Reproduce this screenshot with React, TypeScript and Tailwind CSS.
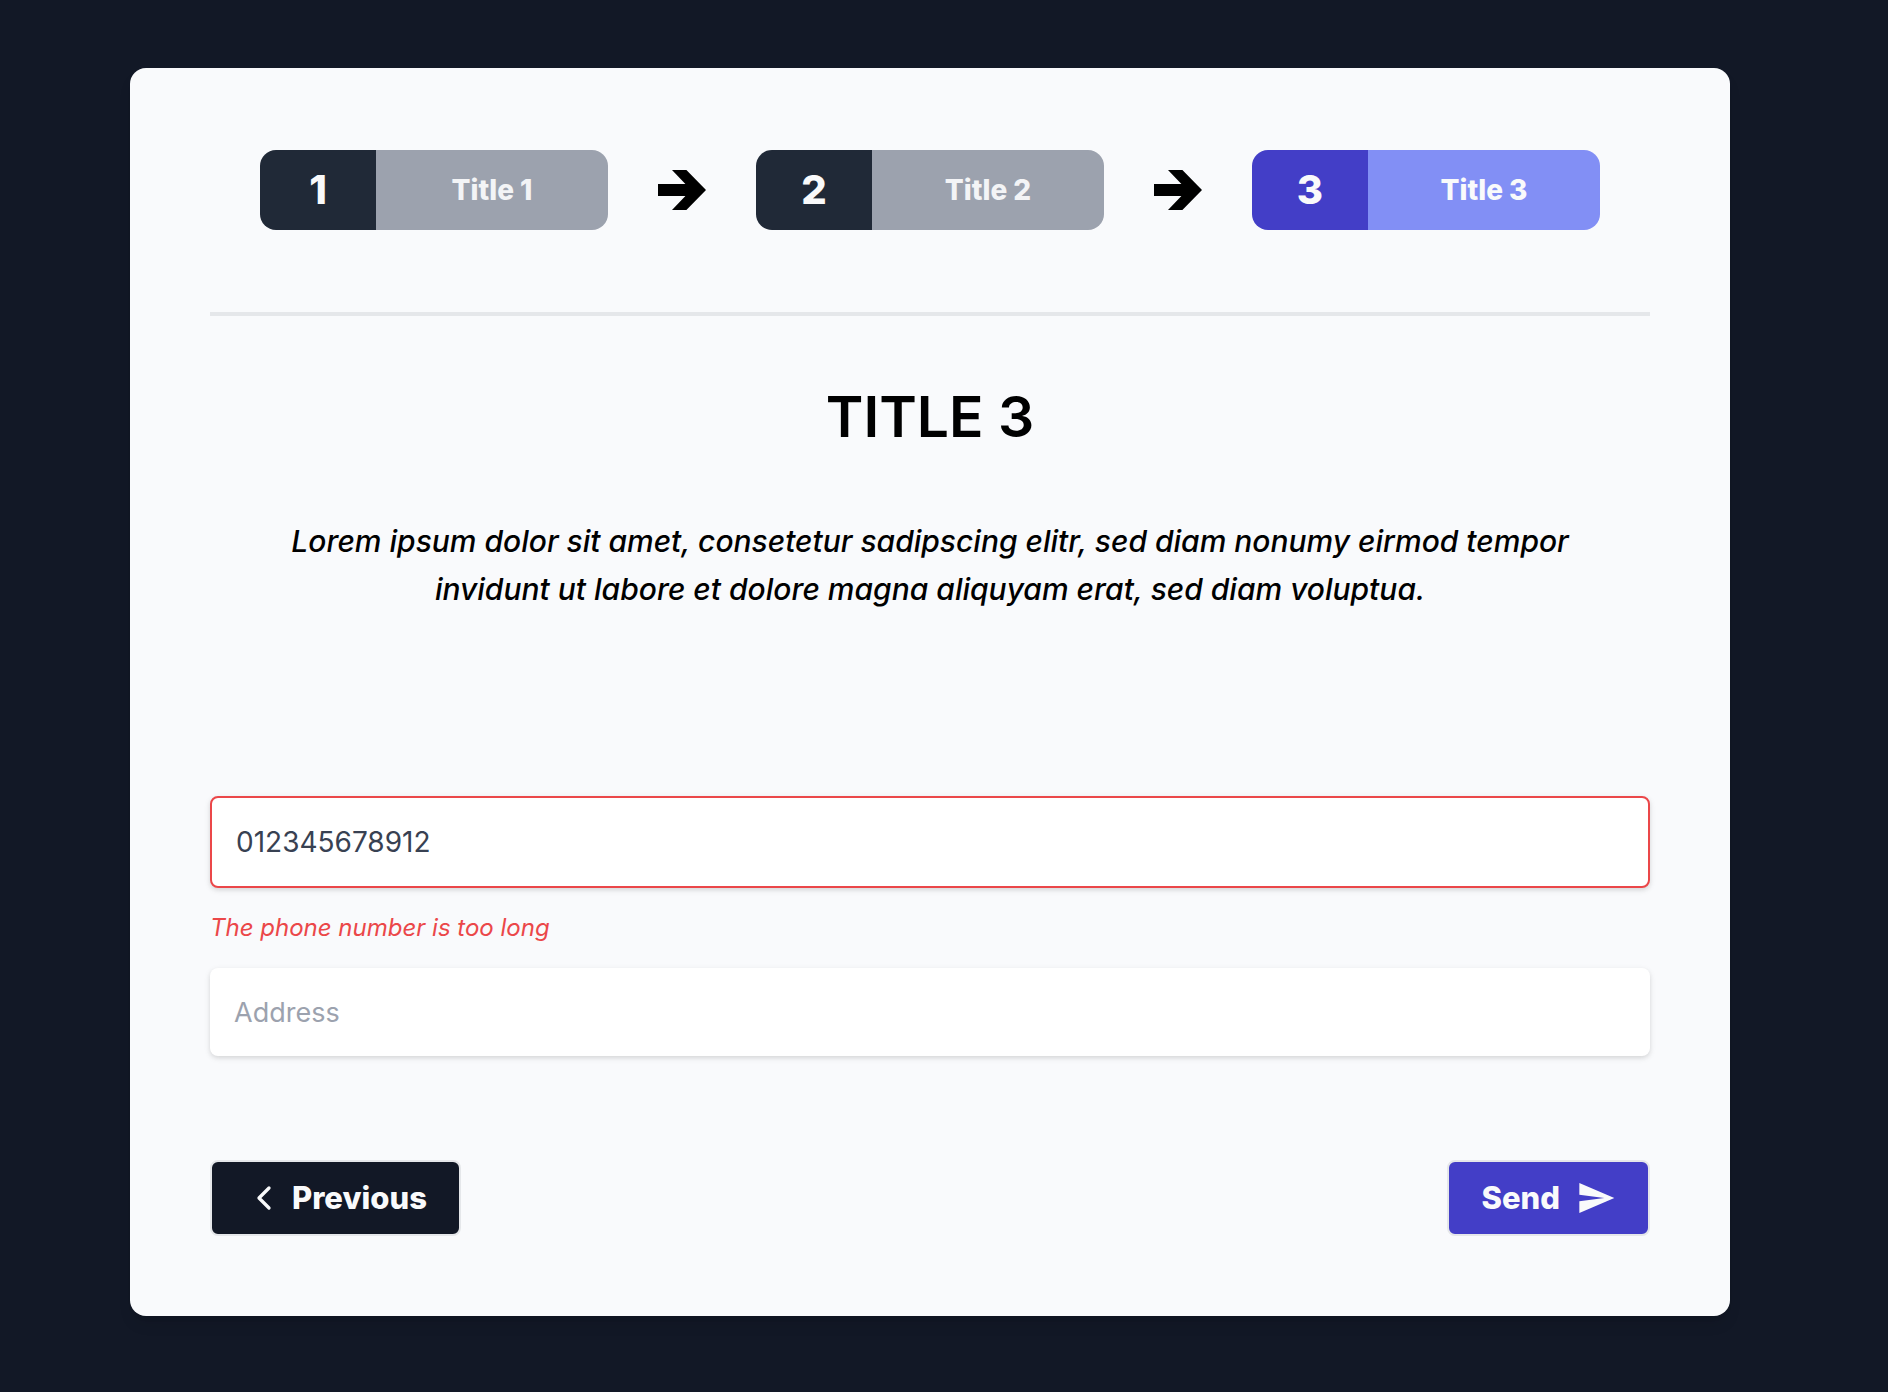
import { Fragment, useState } from "react";

type Step = { number: number; title: string };

const steps: Step[] = [
  { number: 1, title: "Title 1" },
  { number: 2, title: "Title 2" },
  { number: 3, title: "Title 3" },
];

const current = 3;

function StepArrow() {
  return (
    <svg className="h-10 w-12 shrink-0" viewBox="0 0 48 40" fill="#000" aria-hidden="true">
      <path d="M0 14H27.4L14 0H28.4L48 20L28.4 40H14L27.4 26H0Z" />
    </svg>
  );
}

function StepBadge({ step }: { step: Step }) {
  const active = step.number === current;
  return (
    <li
      aria-current={active ? "step" : undefined}
      className="flex h-20 w-[348px] overflow-hidden rounded-2xl font-extrabold"
    >
      <span
        className={`flex w-1/3 items-center justify-center text-[40px] text-gray-50 ${
          active ? "bg-[#433ec7]" : "bg-[#202937]"
        }`}
      >
        {step.number}
      </span>
      <span
        className={`flex w-2/3 items-center justify-center text-[28px] ${
          active ? "bg-[#828ff5] text-gray-50" : "bg-[#9ca2ae] text-gray-100"
        }`}
      >
        {step.title}
      </span>
    </li>
  );
}

export default function App() {
  const [phone, setPhone] = useState("012345678912");
  const [address, setAddress] = useState("");

  return (
    <main className="min-h-screen bg-[#121826] pt-[68px] pr-7 pb-[76px] font-['Inter',sans-serif] text-black">
      <section className="mx-auto max-w-[1600px] rounded-2xl bg-[#f9fafc] px-20 pt-[82px] pb-20 shadow-lg">
        <ol className="flex items-center justify-between px-[50px]">
          {steps.map((step, index) => (
            <Fragment key={step.number}>
              {index > 0 && (
                <li aria-hidden="true">
                  <StepArrow />
                </li>
              )}
              <StepBadge step={step} />
            </Fragment>
          ))}
        </ol>

        <hr className="mt-[82px] border-t-4 border-[#e5e7ea]" />

        <h1 className="mt-[65px] text-center text-[57px] leading-[72px] font-semibold uppercase">Title 3</h1>

        <p className="mt-16 px-12 text-center text-[30px] leading-[48px] font-medium italic">
          Lorem ipsum dolor sit amet, consetetur sadipscing elitr, sed diam nonumy eirmod tempor invidunt ut labore et
          dolore magna aliquyam erat, sed diam voluptua.
        </p>

        <form className="mt-[183px]" onSubmit={(event) => event.preventDefault()}>
          <input
            type="tel"
            aria-label="Phone number"
            aria-invalid="true"
            aria-describedby="phone-error"
            value={phone}
            onChange={(event) => setPhone(event.target.value)}
            className="block h-[92px] w-full rounded-lg border-2 border-[#eb4749] bg-white px-6 text-[28px] text-[#384152] shadow-[0_2px_6px_rgba(0,0,0,0.1),0_2px_4px_rgba(0,0,0,0.06)] outline-none"
          />
          <p id="phone-error" className="mt-5 text-[24px] leading-10 text-[#eb4749] italic">
            The phone number is too long
          </p>
          <input
            type="text"
            aria-label="Address"
            placeholder="Address"
            value={address}
            onChange={(event) => setAddress(event.target.value)}
            className="mt-5 block h-[88px] w-full rounded-lg bg-white px-6 text-[27px] text-[#384152] shadow-[0_2px_6px_rgba(0,0,0,0.1),0_2px_4px_rgba(0,0,0,0.06)] outline-none placeholder:text-[#9ca2ae]"
          />

          <div className="mt-[104px] flex items-center justify-between">
            <button
              type="button"
              className="flex h-[76px] items-center gap-2 rounded-lg border-2 border-[#e5e7ea] bg-[#121826] px-8 text-[31px] font-extrabold text-gray-50"
            >
              <svg
                className="size-10"
                viewBox="0 0 24 24"
                fill="none"
                stroke="currentColor"
                strokeWidth="2"
                strokeLinecap="round"
                strokeLinejoin="round"
                aria-hidden="true"
              >
                <path d="M15 18L9 12L15 6" />
              </svg>
              Previous
            </button>
            <button
              type="submit"
              className="flex h-[76px] items-center gap-4 rounded-lg border-2 border-[#e5e7ea] bg-[#433ec7] px-8 text-[31px] font-extrabold text-gray-50"
            >
              Send
              <svg className="size-10" viewBox="0 0 24 24" fill="currentColor" aria-hidden="true">
                <path d="M2.01 21L23 12 2.01 3 2 10l15 2-15 2z" />
              </svg>
            </button>
          </div>
        </form>
      </section>
    </main>
  );
}
